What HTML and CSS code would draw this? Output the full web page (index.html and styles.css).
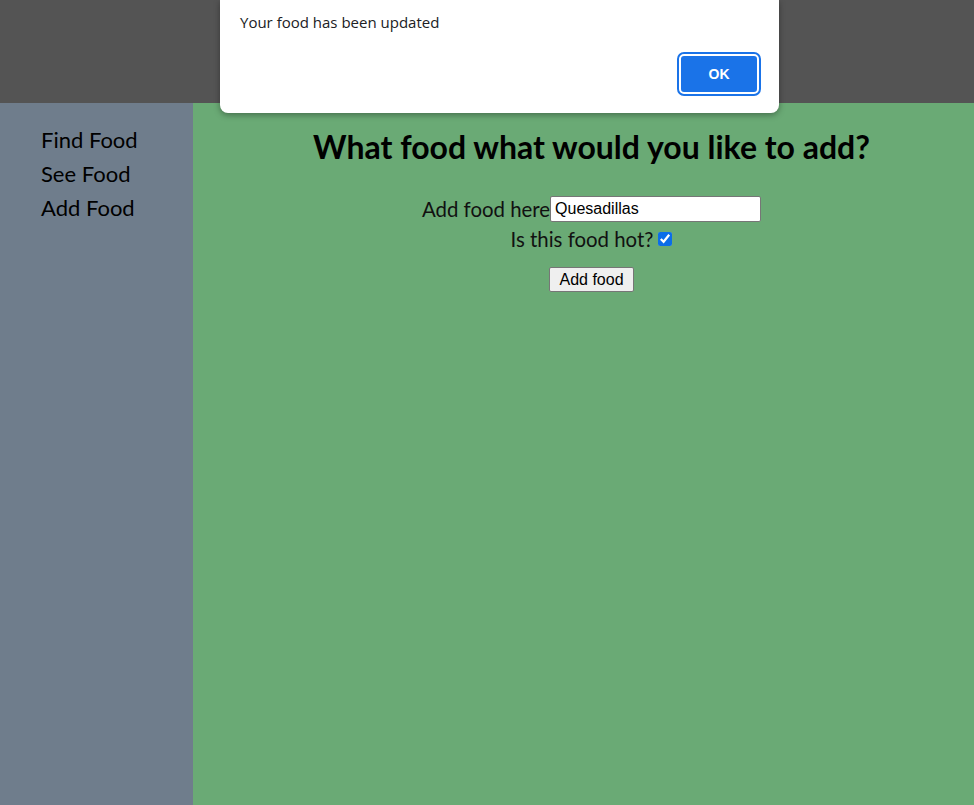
FILE: index.html
```html
<!DOCTYPE html>
<html>
<head>
<meta charset="utf-8">
<link rel="stylesheet" href="styles.css">
</head>
<body>
<header class="topbar"></header>
<div class="layout">
  <nav class="sidebar">
    <a class="nav-link">Find Food</a>
    <a class="nav-link">See Food</a>
    <a class="nav-link">Add Food</a>
  </nav>
  <main class="main">
    <h1 class="title">What food what would you like to add?</h1>
    <form class="food-form">
      <div class="row"><label class="label">Add food here</label><input class="text-input" type="text" value="Quesadillas"></div>
      <div class="row"><label class="label">Is this food hot?</label><input class="check" type="checkbox" checked></div>
      <div class="row btn-row"><button type="button" class="add-btn">Add food</button></div>
    </form>
  </main>
</div>
<div class="dialog">
  <p class="dialog-msg">Your food has been updated</p>
  <div class="dialog-actions"><button class="ok-btn">OK</button></div>
</div>
</body>
</html>
```
FILE: styles.css
```css
html, body { margin: 0; padding: 0; height: 100%; }
body { display: flex; flex-direction: column; font-family: "Lato", "Noto Sans", sans-serif; }
.topbar { height: 103px; background: #545454; flex: none; }
.layout { flex: 1; display: flex; }
.sidebar { width: 193px; background: #6f7d8c; display: flex; flex-direction: column; padding: 20px 0 0 41px; box-sizing: border-box; }
.nav-link { font-size: 22px; line-height: 34px; color: #000; font-family: "Lato", sans-serif; }
.main { flex: 1; background: #6aaa75; padding-left: 16px; text-align: center; }
.title { font-family: "Lato", sans-serif; font-weight: 700; font-size: 32px; margin: 26px 0 29px; line-height: 36px; }
.food-form { display: flex; flex-direction: column; align-items: center; }
.row { display: flex; align-items: center; justify-content: center; }
.label { font-size: 20.4px; line-height: 30px; color: #111; }
.text-input { width: 211px; height: 26px; box-sizing: border-box; border: 1px solid #767676; border-radius: 2px; font-family: "Liberation Sans", Arial, sans-serif; font-size: 16px; padding: 1px 4px; margin: 0; }
.check { width: 14px; height: 14px; margin: 0 0 0 5px; accent-color: #0b6de8; }
.btn-row { margin-top: 13px; }
.add-btn { font-family: "Liberation Sans", Arial, sans-serif; font-size: 16px; height: 25px; padding: 0 9.5px; background: #efefef; border: 1px solid #767676; border-radius: 2px; color: #000; }
.dialog { position: absolute; top: 0; left: 220px; width: 559px; height: 113px; background: #fff; border-radius: 0 0 8px 8px; box-shadow: 0 2px 6px rgba(0,0,0,0.35); font-family: "Open Sans", "Noto Sans", sans-serif; }
.dialog-msg { margin: 12px 0 0 20px; font-size: 15px; color: #202124; }
.dialog-actions { position: absolute; right: 20px; bottom: 19px; }
.ok-btn { width: 80px; height: 40px; background: #1a73e8; color: #fff; border: 2px solid #fff; border-radius: 5px; outline: 2px solid #1a73e8; font-family: "Liberation Sans", Arial, sans-serif; font-weight: 700; font-size: 14px; }
```
